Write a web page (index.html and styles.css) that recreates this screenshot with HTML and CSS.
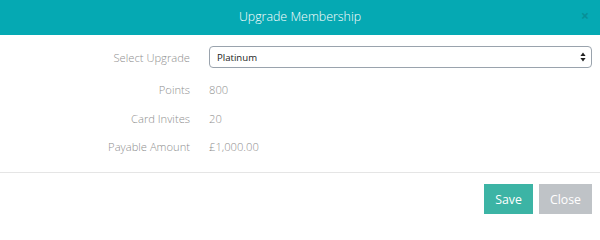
FILE: index.html
```html
<!DOCTYPE html>
<html>
<head>
<meta charset="utf-8">
<link rel="stylesheet" href="styles.css">
</head>
<body>
<div class="modal">
  <div class="modal-header">
    <h4 class="modal-title">Upgrade Membership</h4>
    <span class="close">×</span>
  </div>
  <div class="modal-body">
    <div class="row row-select">
      <label class="label">Select Upgrade</label>
      <div class="field">
        <div class="select">
          <span>Platinum</span>
          <svg class="arrows" width="6" height="10" viewBox="0 0 6 10"><path d="M3 0.5 L5.6 4 L0.4 4 Z M3 9.5 L5.6 6 L0.4 6 Z" fill="#222"/></svg>
        </div>
      </div>
    </div>
    <div class="row">
      <span class="label">Points</span>
      <span class="value">800</span>
    </div>
    <div class="row">
      <span class="label">Card Invites</span>
      <span class="value">20</span>
    </div>
    <div class="row">
      <span class="label">Payable Amount</span>
      <span class="value">£1,000.00</span>
    </div>
  </div>
  <div class="modal-footer">
    <button class="btn btn-save">Save</button>
    <button class="btn btn-close">Close</button>
  </div>
</div>
</body>
</html>
```
FILE: styles.css
```css
* { box-sizing: border-box; }
html, body { margin: 0; padding: 0; background: #fff; }
body { font-family: "Open Sans", "Liberation Sans", sans-serif; width: 600px; height: 222px; overflow: hidden; }
.modal { width: 600px; }
.modal-header {
  position: relative;
  height: 35px;
  background: #05a9b3;
  display: flex;
  align-items: center;
  justify-content: center;
}
.modal-title {
  margin: 0;
  font-weight: 300;
  font-size: 12.4px;
  color: #fff;
  line-height: 1;
}
.close {
  position: absolute;
  right: 11px;
  top: 9px;
  font-size: 14px;
  line-height: 14px;
  color: #0a7f86;
  opacity: 0.6;
  font-weight: 700;
}
.modal-body { padding: 11px 8px 11px 0; }
.row {
  display: flex;
  align-items: center;
  height: 28.5px;
  font-size: 11.2px;
  font-weight: 300;
  color: #8f8f8f;
}
.row-select { height: 22px; margin-bottom: 7.5px; }
.label {
  width: 190px;
  text-align: right;
}
.value { margin-left: 19px; }
.field { margin-left: 19px; flex: 1; }
.select {
  height: 22px;
  border: 1px solid #9aa3ad;
  border-radius: 4px;
  display: flex;
  align-items: center;
  justify-content: space-between;
  padding: 0 5px 0 7px;
  color: #222;
  font-weight: 400;
  font-size: 9.6px;
}
.arrows { display: block; }
.modal-footer {
  border-top: 1px solid #e5e5e5;
  padding: 11px 8px 8px 0;
  display: flex;
  justify-content: flex-end;
  gap: 6px;
}
.btn {
  height: 30px;
  border: none;
  border-radius: 0;
  font-family: "Open Sans", "Liberation Sans", sans-serif;
  font-weight: 400;
  font-size: 12.3px;
  color: #fff;
  padding: 0;
}
.btn-save { width: 49px; background: #3cb4a5; }
.btn-close { width: 53px; background: #bfc3c7; }
```
